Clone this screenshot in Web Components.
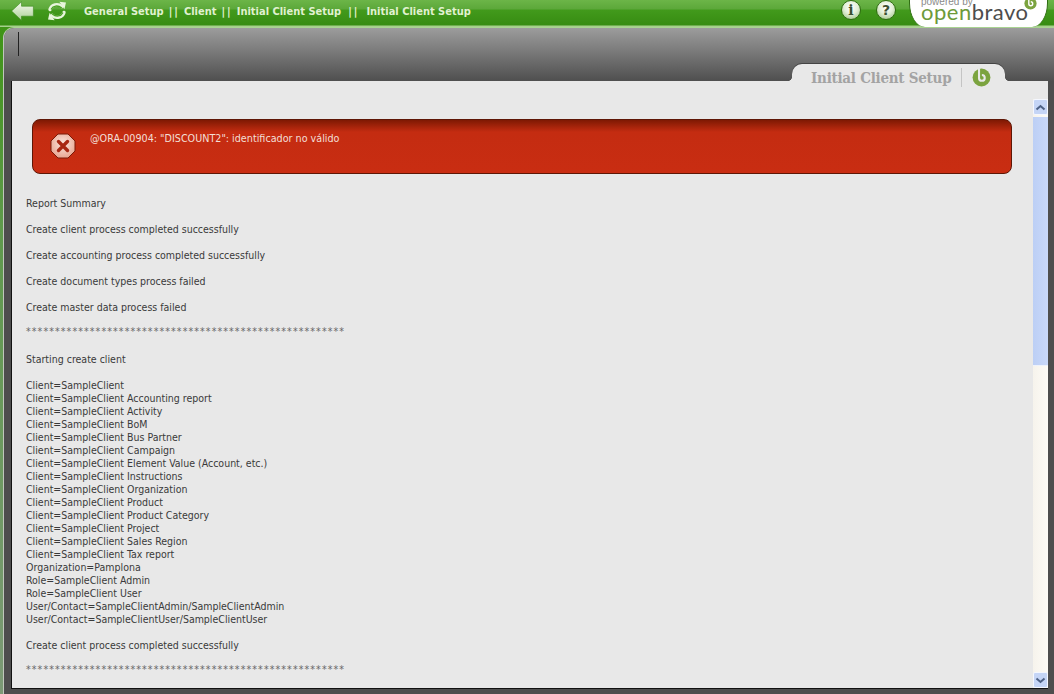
<!DOCTYPE html>
<html lang="en">
<head>
<meta charset="utf-8">
<title>Initial Client Setup</title>
<style>
    html, body { margin: 0; height: 694px; overflow: hidden; background: #4e4e4e; }
    body { font: 11px/13px "DejaVu Sans", "Liberation Sans", sans-serif; color: #333; }
    app-shell { height: 694px; }
    .rule { letter-spacing: 1.08px; line-height: 9px; vertical-align: 2px; color: #666; }
</style>
</head>
<body>
<app-shell>
    <top-bar slot="top">
        <bar-crumb>General Setup</bar-crumb>
        <bar-crumb>Client</bar-crumb>
        <bar-crumb>Initial Client Setup</bar-crumb>
        <bar-crumb>Initial Client Setup</bar-crumb>
    </top-bar>
    <window-tab slot="tab">Initial Client Setup</window-tab>
    <error-box slot="content">@ORA-00904: "DISCOUNT2": identificador no válido</error-box>
    <report-log slot="content">Report Summary

Create client process completed successfully

Create accounting process completed successfully

Create document types process failed

Create master data process failed

<span class="rule">*******************************************************</span>

Starting create client

Client=SampleClient
Client=SampleClient Accounting report
Client=SampleClient Activity
Client=SampleClient BoM
Client=SampleClient Bus Partner
Client=SampleClient Campaign
Client=SampleClient Element Value (Account, etc.)
Client=SampleClient Instructions
Client=SampleClient Organization
Client=SampleClient Product
Client=SampleClient Product Category
Client=SampleClient Project
Client=SampleClient Sales Region
Client=SampleClient Tax report
Organization=Pamplona
Role=SampleClient Admin
Role=SampleClient User
User/Contact=SampleClientAdmin/SampleClientAdmin
User/Contact=SampleClientUser/SampleClientUser

Create client process completed successfully

<span class="rule">*******************************************************</span></report-log>
</app-shell>

<script>
    const BRAVO_MARK = `
<svg viewBox="0 0 20 20" width="100%" height="100%">
    <circle cx="10" cy="10" r="9.4" fill="#7ba33f"/>
    <path d="M7.4 .6V10.4a3 3 0 1 0 3-3" fill="none" stroke="var(--mark-bg, #e8e8e8)" stroke-width="2.2"/>
</svg>`;

    class AppShell extends HTMLElement {
        constructor() {
            super();
            const shadow = this.attachShadow({mode: 'open'});
            shadow.innerHTML = `
<style>
    :host {
        display: flex;
        flex-direction: column;
        overflow: hidden;
    }
    .work {
        flex: 1;
        min-height: 0;
        display: flex;
        background: linear-gradient(#3f9416, #5f9a4c 30%, #7c9a76);
        padding-left: 3px;
    }
    .panel {
        flex: 1;
        min-width: 0;
        display: flex;
        flex-direction: column;
        border-top-left-radius: 11px;
        border-top: 1px solid #a9d392;
        border-left: 1px solid #c0c8bc;
        background: #4e4e4e;
    }
    .head {
        height: 53px;
        flex: none;
        display: flex;
        justify-content: flex-end;
        align-items: flex-end;
        padding-right: 49px;
        border-top-left-radius: 10px;
        background: linear-gradient(#9c9c9c, #4f4f4f);
        position: relative;
        z-index: 1;
    }
    .sep {
        width: 1px;
        height: 24px;
        background: #222;
        margin: 4px auto 0 14px;
        align-self: flex-start;
    }
    .body {
        flex: 1;
        min-height: 0;
        display: flex;
        margin: 0 6px 5px 7px;
        background: #e8e8e8;
        border-left: 1px solid #111;
        border-bottom: 1px solid #111;
    }
    .scroll {
        flex: 1;
        min-width: 0;
        overflow: hidden;
        padding: 38px 21px 0 20px;
    }
</style>
<slot name="top"></slot>
<div class="work">
    <div class="panel">
        <div class="head">
            <div class="sep"></div>
            <slot name="tab"></slot>
        </div>
        <div class="body">
            <div class="scroll"><slot name="content"></slot></div>
            <fake-scrollbar></fake-scrollbar>
        </div>
    </div>
</div>
    `;
        }
    }

    class TopBar extends HTMLElement {
        constructor() {
            super();
            const shadow = this.attachShadow({mode: 'open'});
            shadow.innerHTML = `
<style>
    :host {
        display: flex;
        align-items: flex-start;
        flex: none;
        height: 27px;
        overflow: hidden;
        background: linear-gradient(#6cb548, #5ca83a 9px, #429a1c 10px, #378c12 25px, #a6d08c 26px);
    }
    .back { margin: 1px 0 0 11px; width: 23px; height: 20px; }
    .refresh { margin: 1px 0 0 13px; width: 20px; height: 20px; }
    .crumbs {
        display: flex;
        margin: 5px 0 0 17px;
        flex: 1;
        font: bold 11px/13px "DejaVu Sans", sans-serif;
        font-stretch: condensed;
        color: #e0f1d0;
    }
    .round {
        width: 20px;
        height: 20px;
        box-sizing: border-box;
        border-radius: 50%;
        border: 1px solid #2f6d12;
        background: radial-gradient(circle at 50% 35%, #ffffff, #e3efd8 45%, #93bb78);
        color: #3c5030;
        font: bold 14px/18px "DejaVu Serif", serif;
        text-align: center;
    }
    .info { margin-right: 15px; }
    .help { margin-right: 13px; font-family: "DejaVu Sans", sans-serif; }
    .logo {
        width: 139px;
        height: 27px;
        margin-right: 6px;
        box-sizing: border-box;
        position: relative;
        background: #fff;
        border: solid #2f6d12;
        border-width: 0 1px;
        border-radius: 0 0 16px 16px / 0 0 24px 24px;
        overflow: hidden;
        padding-left: 11px;
        --mark-bg: #fff;
    }
    .by {
        font: 10px/10px "Liberation Sans", sans-serif;
        color: #8a8a8a;
        margin-top: -3px;
    }
    .name {
        font: 400 22px/9px "Lato", sans-serif;
        letter-spacing: .5px;
        color: #4d4d4d;
        white-space: nowrap;
    }
    .name b { font-weight: 400; color: #6d9a3a; }
    .mark { position: absolute; right: 10px; top: -3px; width: 13px; height: 13px; }
</style>
<svg class="back" viewBox="0 0 23 20">
    <defs>
        <linearGradient id="pale" x1="0" y1="0" x2="0" y2="1">
            <stop offset="0" stop-color="#f6fbef"/>
            <stop offset="1" stop-color="#aacf95"/>
        </linearGradient>
    </defs>
    <path d="M.6 10 10.5.8v4.4h11.9v10H10.5v4.2z" fill="url(#pale)" stroke="#3b8a1c" stroke-width=".6"/>
</svg>
<svg class="refresh" viewBox="0 0 20 20" fill="none" stroke-linecap="round">
    <path d="M3 8.5C4.5 3.6 11 2.2 14.6 5.6" stroke="#e8f5dc" stroke-width="3.4"/>
    <path d="M17 11.5C15.5 16.4 9 17.8 5.4 14.4" stroke="#e8f5dc" stroke-width="3.4"/>
    <path d="M12.4.8 19 1.6l-1.6 6.6z" fill="#e8f5dc"/>
    <path d="M7.6 19.2 1 18.4l1.6-6.6z" fill="#e8f5dc"/>
    <path d="M4.4 8C6 4.6 11 4 14.4 6.8" stroke="#4ba124" stroke-width="1.4"/>
    <path d="M15.6 12C14 15.4 9 16 5.6 13.2" stroke="#4ba124" stroke-width="1.4"/>
</svg>
<div class="crumbs"><slot></slot></div>
<div class="round info">i</div>
<div class="round help">?</div>
<div class="logo">
    <div class="by">powered by</div>
    <div class="name"><b>open</b>bravo</div>
    <div class="mark">${BRAVO_MARK}</div>
</div>
    `;
        }
    }

    class BarCrumb extends HTMLElement {
        constructor() {
            super();
            const shadow = this.attachShadow({mode: 'open'});
            shadow.innerHTML = `
<style>
    :host { display: inline-flex; white-space: nowrap; }
    :host(:nth-child(1))::after { content: "||"; margin: 0 4px 0 5px; letter-spacing: 2px; }
    :host(:nth-child(2))::after { content: "||"; margin: 0 4px 0 5px; letter-spacing: 2px; }
    :host(:nth-child(3))::after { content: "||"; margin: 0 7px; letter-spacing: 2px; }
</style>
<slot></slot>
    `;
        }
    }

    class WindowTab extends HTMLElement {
        constructor() {
            super();
            const shadow = this.attachShadow({mode: 'open'});
            shadow.innerHTML = `
<style>
    :host {
        display: flex;
        align-items: center;
        box-sizing: border-box;
        position: relative;
        width: 213px;
        height: 24px;
        margin-bottom: -7px;
        padding: 3px 0 0 19px;
        border-radius: 10px 10px 0 0;
        background: #e8e8e8;
        box-shadow: 0 -1px 0 #444;
        color: #a3a3a3;
        font: bold 15px/18px "DejaVu Serif", serif;
        font-stretch: condensed;
        letter-spacing: -.25px;
        white-space: nowrap;
    }
    :host::before, :host::after {
        content: "";
        position: absolute;
        bottom: 7px;
        width: 5px;
        height: 5px;
    }
    :host::before { left: -5px; background: radial-gradient(circle at 0 0, transparent 5px, #e8e8e8 5.5px); }
    :host::after { right: -5px; background: radial-gradient(circle at 100% 0, transparent 5px, #e8e8e8 5.5px); }
    .sep { width: 1px; height: 19px; background: #c4c4c4; margin: 0 10px; flex: none; }
    .mark { width: 19px; height: 19px; flex: none; }
</style>
<slot></slot>
<div class="sep"></div>
<div class="mark">${BRAVO_MARK}</div>
    `;
        }
    }

    class ErrorBox extends HTMLElement {
        constructor() {
            super();
            const shadow = this.attachShadow({mode: 'open'});
            shadow.innerHTML = `
<style>
    :host {
        display: flex;
        box-sizing: border-box;
        height: 55px;
        border: 1px solid #5e1605;
        border-radius: 8px;
        background: linear-gradient(#7e1903, #c42c11 12px, #c92d12);
        color: #f3dfd6;
        font: 10.7px/13px "DejaVu Sans", "Liberation Sans", sans-serif;
        font-stretch: condensed;
        white-space: nowrap;
    }
    svg { width: 26px; height: 26px; margin: 13px 14px 0 17px; flex: none; }
    .text { margin-top: 12px; }
</style>
<svg viewBox="0 0 26 26">
    <defs>
        <radialGradient id="stop" cx=".5" cy=".4" r=".7">
            <stop offset="0" stop-color="#fbe6dd"/>
            <stop offset="1" stop-color="#e59c86"/>
        </radialGradient>
    </defs>
    <path d="M8 1h10l7 7v10l-7 7H8l-7-7V8z" fill="url(#stop)" stroke="#7b1a08" stroke-width="1"/>
    <path d="M8.5 8.5l9 9M17.5 8.5l-9 9" stroke="#a82712" stroke-width="3.4" stroke-linecap="round"/>
</svg>
<div class="text"><slot></slot></div>
    `;
        }
    }

    class ReportLog extends HTMLElement {
        constructor() {
            super();
            const shadow = this.attachShadow({mode: 'open'});
            shadow.innerHTML = `
<style>
    :host {
        display: block;
        margin: 23px 0 0 -6px;
        color: #3a3a3a;
        font: 10.5px/13px "DejaVu Sans", "Liberation Sans", sans-serif;
        font-stretch: condensed;
    }
    slot { display: block; white-space: pre-line; }
</style>
<slot></slot>
    `;
        }
    }

    class FakeScrollbar extends HTMLElement {
        constructor() {
            super();
            const shadow = this.attachShadow({mode: 'open'});
            shadow.innerHTML = `
<style>
    :host {
        display: flex;
        flex-direction: column;
        flex: none;
        width: 15px;
        margin-top: 18px;
        background: linear-gradient(90deg, #f6f3ec, #fdfbf6);
    }
    .btn {
        height: 16px;
        flex: none;
        box-sizing: border-box;
        border: 1px solid #f4f7ff;
        border-radius: 2px;
        background: #c5d5f6;
        display: flex;
        align-items: center;
        justify-content: center;
    }
    svg { width: 11px; height: 7px; }
    .thumb {
        height: 249px;
        flex: none;
        margin-top: 2px;
        box-sizing: border-box;
        background: linear-gradient(90deg, #bccff5, #c9d8f9);
        border-bottom: 1px solid #eef2fb;
    }
    .fill { flex: 1; }
</style>
<div class="btn"><svg viewBox="0 0 11 7"><path d="M1.5 5.5l4-3.5 4 3.5" fill="none" stroke="#4d6185" stroke-width="2"/></svg></div>
<div class="thumb"></div>
<div class="fill"></div>
<div class="btn"><svg viewBox="0 0 11 7"><path d="M1.5 1.5l4 3.5 4-3.5" fill="none" stroke="#4d6185" stroke-width="2"/></svg></div>
    `;
        }
    }

    customElements.define('app-shell', AppShell);
    customElements.define('top-bar', TopBar);
    customElements.define('bar-crumb', BarCrumb);
    customElements.define('window-tab', WindowTab);
    customElements.define('error-box', ErrorBox);
    customElements.define('report-log', ReportLog);
    customElements.define('fake-scrollbar', FakeScrollbar);
</script>
</body>
</html>
